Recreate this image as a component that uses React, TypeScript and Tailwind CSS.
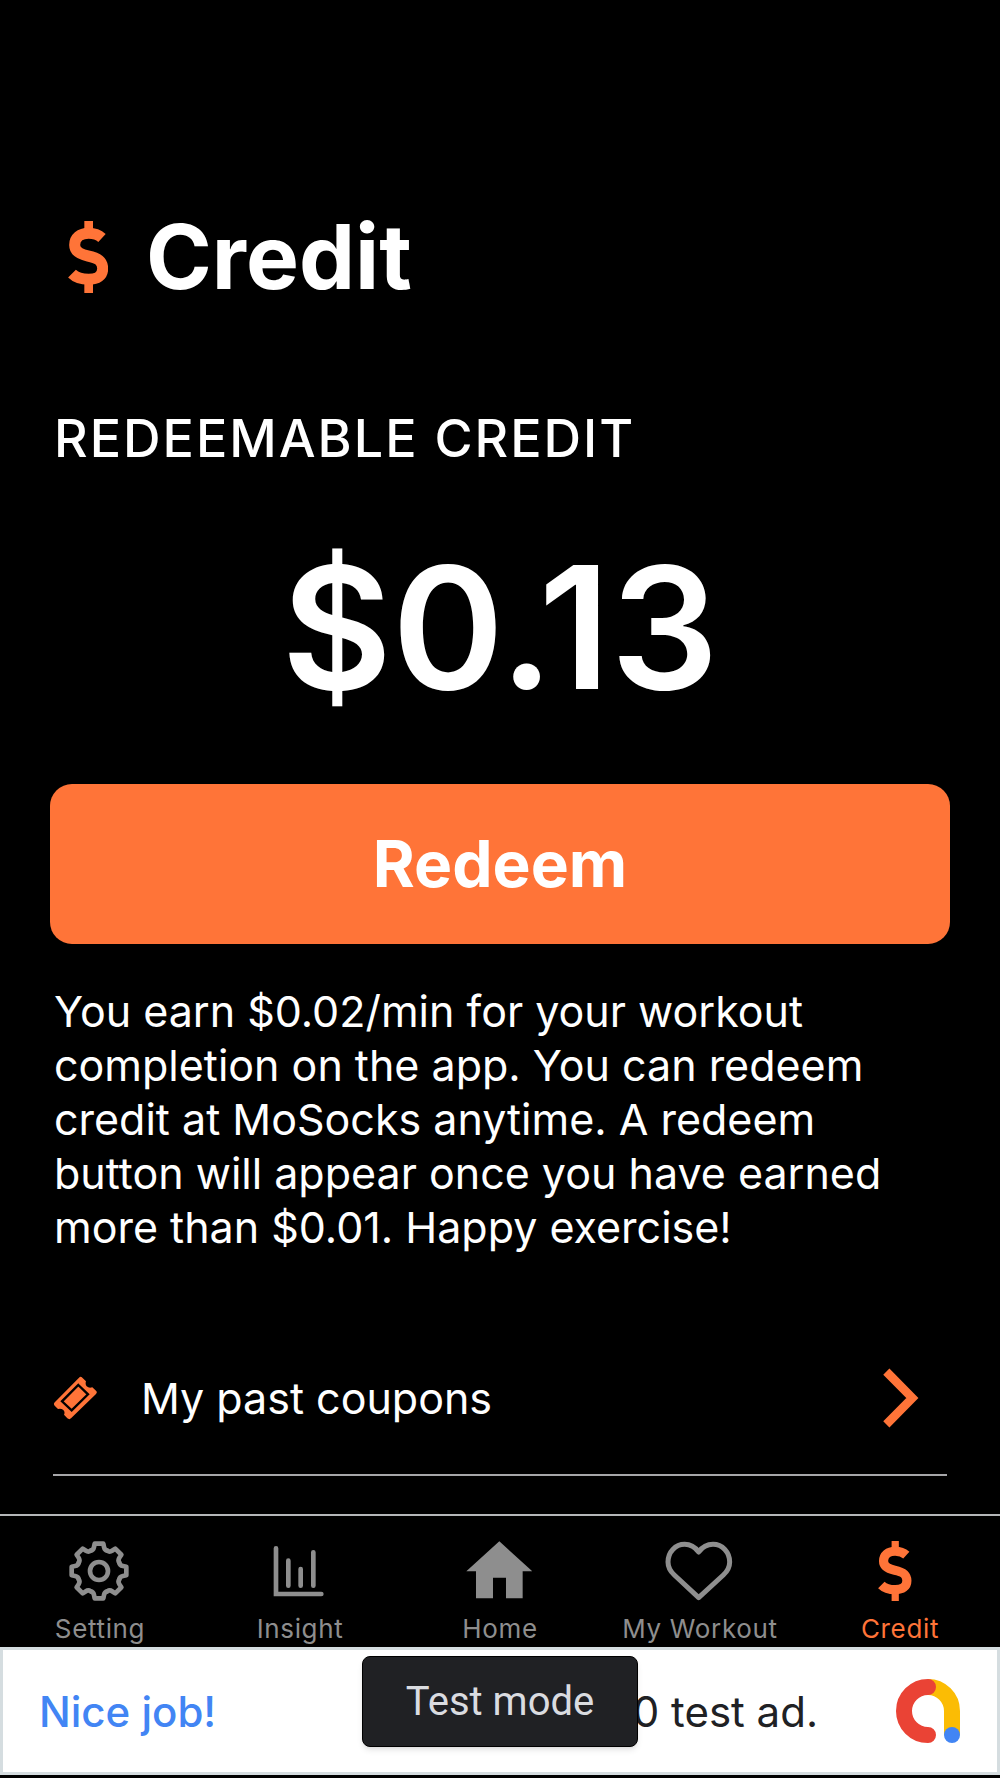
import type { ReactNode } from "react";

function DollarIcon({ className }: { className?: string }) {
  return (
    <svg viewBox="0 0 120 216" className={className} fill="none" stroke="currentColor" aria-hidden="true">
      <path d="M62 0V32M62 180V216" strokeWidth="26" />
      <path
        d="M102 51C92 42 78 37 62 37C36 37 20 51 20 72C20 92 36 100 60 105C90 111 104 120 104 143C104 164 88 175 62 175C40 175 22 168 12 158"
        strokeWidth="33"
      />
    </svg>
  );
}

function TicketIcon() {
  return (
    <svg viewBox="72 105 132 132" className="h-11 w-11 text-[#ff7438]" aria-hidden="true">
      <path
        d="M78 183L150 110Q155 105 160 110L171 121Q168 130 173 136Q180 143 190 139L201 149Q206 154 201 159L126 232Q121 237 115 232L105 221Q109 213 103 207Q96 201 87 204L77 194Q72 188 78 183Z"
        fill="currentColor"
      />
      <path d="M148 132L177 160L128 208L99 181Z" fill="none" stroke="#000" strokeWidth="7" />
    </svg>
  );
}

const GEAR_ANGLES = [0, 45, 90, 135, 180, 225, 270, 315];

function GearIcon() {
  return (
    <svg
      viewBox="-90 -90 180 180"
      className="h-[60px] w-[60px]"
      fill="none"
      stroke="currentColor"
      strokeWidth="14"
      strokeLinecap="round"
      strokeLinejoin="round"
      aria-hidden="true"
    >
      <circle r="27" />
      {GEAR_ANGLES.map((angle) => (
        <path
          key={angle}
          d="M-25 -61Q-17 -62 -15 -72L-13 -82H13L15 -72Q17 -62 25 -61"
          transform={`rotate(${angle})`}
        />
      ))}
    </svg>
  );
}

function ChartIcon() {
  return (
    <svg
      viewBox="808 121 180 180"
      className="h-[60px] w-[60px]"
      fill="none"
      stroke="currentColor"
      strokeWidth="14"
      strokeLinecap="round"
      aria-hidden="true"
    >
      <path d="M829 143V280H965M866 180V255M903 205V255M941 155V255" />
    </svg>
  );
}

function HomeIcon() {
  return (
    <svg viewBox="406 121 200 180" className="h-[60px]" fill="currentColor" aria-hidden="true">
      <path d="M506 122L605 212H576V293H526V231H487V293H436V212H407Z" />
    </svg>
  );
}

function HeartIcon() {
  return (
    <svg
      viewBox="194 120 204 180"
      className="h-[60px]"
      fill="none"
      stroke="currentColor"
      strokeWidth="15"
      strokeLinejoin="round"
      aria-hidden="true"
    >
      <path d="M295 153C284 138 270 130 253 130C225 130 203 153 203 183C203 199 210 211 222 222L295 290L369 222C381 211 388 199 388 183C388 153 366 130 338 130C321 130 306 138 295 153Z" />
    </svg>
  );
}

function AdMobLogo() {
  return (
    <svg viewBox="0 0 64 64" className="h-16 w-16 shrink-0" fill="none" strokeWidth="16" aria-hidden="true">
      <path d="M32 8A24 24 0 0 1 56 32V56" stroke="#fbbc04" />
      <path d="M32 8A24 24 0 0 0 32 56" stroke="#ea4335" strokeLinecap="round" />
      <circle cx="56" cy="56" r="8" fill="#4285f4" />
    </svg>
  );
}

const tabs: { label: string; icon: ReactNode; active?: boolean }[] = [
  { label: "Setting", icon: <GearIcon /> },
  { label: "Insight", icon: <ChartIcon /> },
  { label: "Home", icon: <HomeIcon /> },
  { label: "My Workout", icon: <HeartIcon /> },
  { label: "Credit", icon: <DollarIcon className="mr-2 h-[60px]" />, active: true },
];

function TabBar() {
  return (
    <nav className="mt-auto grid grid-cols-5 border-t-2 border-[#b4b6b8] pt-[25px] pb-0.5">
      {tabs.map((tab) => (
        <a
          key={tab.label}
          href="#"
          aria-current={tab.active ? "page" : undefined}
          className={`flex flex-col items-center gap-3 ${tab.active ? "text-[#ff7438]" : "text-[#8e8e8e]"}`}
        >
          <span className="mr-0.5">{tab.icon}</span>
          <span className="text-[26px] leading-8 tracking-wide whitespace-nowrap">{tab.label}</span>
        </a>
      ))}
    </nav>
  );
}

function AdBanner() {
  return (
    <aside className="relative mb-[3px] flex h-32 items-center border-[3px] border-[#d5dde0] bg-white pr-[37px] pl-9">
      <span className="text-[42px] font-medium text-[#4285f4]">Nice job!</span>
      <span className="mr-[78px] ml-auto text-[42px] whitespace-nowrap text-[#202124]">
        This is 320x50 test ad.
      </span>
      <AdMobLogo />
      <div className="absolute top-[6px] left-1/2 flex h-[91px] w-[276px] -translate-x-1/2 items-center justify-center rounded-lg border border-black bg-[#202124] font-[Roboto,sans-serif] text-[40px] text-[#dadce0] shadow-md">
        Test mode
      </div>
    </aside>
  );
}

export default function App() {
  return (
    <div className="flex min-h-screen flex-col bg-black font-[Inter,sans-serif] text-white">
      <main className="px-[50px] pt-[209px] pb-8">
        <header className="flex items-center gap-[38px] pl-[18px]">
          <DollarIcon className="h-[72px] text-[#ff7438]" />
          <h1 className="text-[89px] leading-[96px] font-bold">Credit</h1>
        </header>

        <h2 className="mt-[102px] pl-1 text-[52px] leading-[64px] font-medium tracking-[2px]">
          REDEEMABLE CREDIT
        </h2>
        <p className="mt-[60px] text-center text-[170px] leading-[192px] font-semibold">$0.13</p>

        <button
          type="button"
          className="mt-[61px] h-40 w-full rounded-[22px] bg-[#ff7438] text-[64px] font-bold"
        >
          Redeem
        </button>

        <p className="mt-10 pl-1 text-[43px] leading-[54px]">
          You earn $0.02/min for your workout completion on the app. You can redeem credit at
          MoSocks anytime. A redeem button will appear once you have earned more than $0.01. Happy
          exercise!
        </p>

        <a
          href="#"
          className="mx-[3px] mt-[68px] flex h-[154px] items-center border-b-2 border-[#a6a6a8] pr-7"
        >
          <TicketIcon />
          <span className="ml-11 text-[43px]">My past coupons</span>
          <svg
            viewBox="0 0 108 180"
            className="ml-auto h-[60px] text-[#ff7438]"
            fill="none"
            stroke="currentColor"
            strokeWidth="26"
            aria-hidden="true"
          >
            <path d="M10 11L88 90L10 169" />
          </svg>
        </a>
      </main>

      <TabBar />
      <AdBanner />
    </div>
  );
}
